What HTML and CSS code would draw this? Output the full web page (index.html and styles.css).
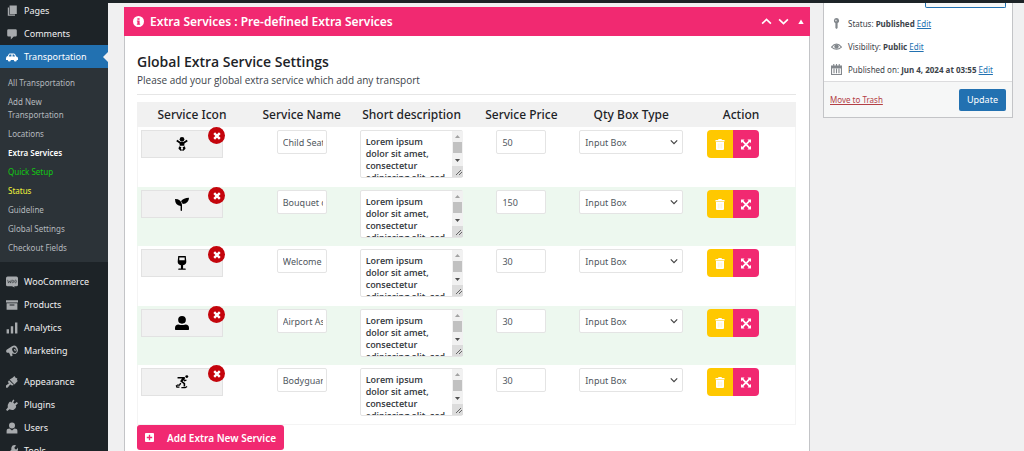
FILE: index.html
```html
<!DOCTYPE html>
<html lang="en">
<head>
<meta charset="utf-8">
<title>Extra Services</title>
<link rel="stylesheet" href="styles.css">
</head>
<body>
<svg class="sprite" aria-hidden="true">
  <symbol id="i-pages" viewBox="0 0 20 20"><path d="M6 1h12v14H6zM3 4h2v12h10v2H3z"/></symbol>
  <symbol id="i-comment" viewBox="0 0 20 20"><path d="M4 2h12q2 0 2 2v8q0 2-2 2h-3l-5 5v-5H4q-2 0-2-2V4q0-2 2-2z"/></symbol>
  <symbol id="i-car" viewBox="0 0 20 20"><path d="M6 4h7q1 0 2 1l2 4q3 0 3 3v3h-2a2.500 2.500 0 0 1-5 0H8a2.500 2.500 0 0 1-5 0H0v-3q0-3 3-3.500l1.500-3Q5 4 6 4zm0 2L4.500 9H9V6zm5 0v3h4l-1.500-3z"/></symbol>
  <symbol id="i-woo" viewBox="0 0 22 20"><path d="M3 0h16q3 0 3 3v12q0 3-3 3h-4l1 2-5-2H3q-3 0-3-3V3q0-3 3-3z"/><path class="cut" d="M3 6l1.500 6 2-4 2 4 1-6M11 9a1.500 2.500 0 1 0 3 0 1.500 2.500 0 1 0-3 0M16 9a1.500 2.500 0 1 0 3 0 1.500 2.500 0 1 0-3 0"/></symbol>
  <symbol id="i-products" viewBox="0 0 20 20"><path d="M0 2h20v4H0zM1 7h18v11H1zm5 2v2h8V9z" fill-rule="evenodd"/></symbol>
  <symbol id="i-bars" viewBox="0 0 20 20"><path d="M1 12h4v7H1zM8 7h4v12H8zM15 1h4v18h-4z"/></symbol>
  <symbol id="i-megaphone" viewBox="0 0 20 20"><path d="M1 8l9-6q6-3 9 3t-3 10l-6-1 1 4-3 1-3-6-3 0Q-1 11 1 8zM12 4q-3 2-1 6t5 3q3-2 1-6t-5-3zm1 3q2-1 3 1t-1 3z" fill-rule="evenodd"/></symbol>
  <symbol id="i-brush" viewBox="0 0 20 20"><path d="M11 3l3-3 2 3 3 1-1 3 2 1-6 6-8-8zM5 7l8 8-3 1-3-2-4 5q-2 1-3 0t0-3l5-4-2-2z"/></symbol>
  <symbol id="i-plug" viewBox="0 0 20 20"><path d="M12 1l2 1-2 4 2 2 4-3 2 2-4 4 1 1q0 4-4 6-4 1-7-1l-4 3-2-2 3-4Q2 10 5 6l2-2 2 2z"/></symbol>
  <symbol id="i-user" viewBox="0 0 20 20"><circle cx="10" cy="6" r="5"/><path d="M1 19v-4q0-4 5-4l4 3 4-3q5 0 5 4v4z"/></symbol>
  <symbol id="i-wrench" viewBox="0 0 20 20"><path d="M11 1q3-2 6 0l-3 3 1 3 3 0 2-3q1 5-2 7t-6 1l-7 7q-2 1-4-1t0-3l8-7q-1-4 2-7z"/></symbol>
  <symbol id="i-info" viewBox="0 0 20 20"><path d="M10 0a10 10 0 1 1 0 20 10 10 0 1 1 0-20zM8 4v3h4V4zM7 8v2h1v4H7v2h6v-2h-1V8z" fill-rule="evenodd"/></symbol>
  <symbol id="i-up" viewBox="0 0 20 20"><path class="line" d="M2 14l8-8 8 8"/></symbol>
  <symbol id="i-down" viewBox="0 0 20 20"><path class="line" d="M2 6l8 8 8-8"/></symbol>
  <symbol id="i-tri" viewBox="0 0 20 20"><path d="M10 2l9 15H1z"/></symbol>
  <symbol id="i-x" viewBox="0 0 20 20"><path class="line thick" d="M3 3l14 14M17 3L3 17"/></symbol>
  <symbol id="i-baby" viewBox="0 0 20 24"><circle cx="10" cy="4" r="4"/><path class="line" d="M1 6l6 4h6l6-4"/><path d="M6 9h8v6H6zM5 16l4 1.500-1 2 2 3-2 1.500-4-4zM15 16l-4 1.500 1 2-2 3 2 1.500 4-4z"/></symbol>
  <symbol id="i-seedling" viewBox="0 0 20 20"><path d="M0 3q9 0 10 8v8q0 1-1 1t-1-1v-6Q0 12 0 3zM20 1q0 8-9 9-1-3-2.500-4Q12 1 20 1z"/></symbol>
  <symbol id="i-glass" viewBox="0 0 20 26"><path d="M3 0h14l1 10q0 6-6 7v6h4q1 0 1 2.500H3Q3 23 4 23h4v-6q-6-1-6-7zm2 3v5h10V3z" fill-rule="evenodd"/></symbol>
  <symbol id="i-person" viewBox="0 0 20 20"><circle cx="10" cy="5.500" r="5.500"/><path d="M0 19v-2q0-5 5-5 5 1.500 10 0 5 0 5 5v2q0 1-1 1H1q-1 0-1-1z"/></symbol>
  <symbol id="i-skate" viewBox="0 0 20 22"><circle cx="17.500" cy="2.500" r="2.300"/><path d="M3 3h11l1 2-4 5 4 3v5h-2.500v-4L7 10l3-4.500H3zM7 12l2 1.500L6.500 17H2v-2h3.500z"/><path class="line mid" d="M12 6l2 3 3-1M1 16l1 3h4M9 20h6l3-2"/></symbol>
  <symbol id="i-trash" viewBox="0 0 20 22"><path d="M1 2h5l1-2h6l1 2h5v3H1zM2 6h16v14q0 2-2 2H4q-2 0-2-2z"/><path class="slot" d="M6.500 9v10M10 9v10M13.500 9v10"/></symbol>
  <symbol id="i-expand" viewBox="0 0 20 20"><path d="M0 0h7L5 2.500l5 5 5-5L13 0h7v7l-2.500-2-5 5 5 5 2.500-2v7h-7l2-2.500-5-5-5 5L7 20H0v-7l2.500 2 5-5-5-5L0 7z"/></symbol>
  <symbol id="i-plus" viewBox="0 0 20 20"><path d="M2 0h16q2 0 2 2v16q0 2-2 2H2q-2 0-2-2V2q0-2 2-2zM8.500 4v4.500H4v3h4.500V16h3v-4.500H16v-3h-4.500V4z" fill-rule="evenodd"/></symbol>
  <symbol id="i-pin" viewBox="0 0 20 20"><path d="M10 0a5 5 0 0 1 2 9.500V18l-2 2-2-2V9.500A5 5 0 0 1 10 0zM8 3v3h2V3z" fill-rule="evenodd"/></symbol>
  <symbol id="i-eye" viewBox="0 0 20 20"><path class="line mid" d="M1 11q9-11 18 0-9 8-18 0z"/><circle cx="10" cy="10" r="4"/></symbol>
  <symbol id="i-cal" viewBox="0 0 20 20"><path d="M0 3h20v5H0z"/><path class="line mid" d="M1 4h18v15H1zM5 0v5M10 0v5M15 0v5M5.500 8v9M10 8v9M14.500 8v9"/></symbol>
</svg>

<div class="adminbar"></div>
<div class="layout">
  <nav class="sidebar" aria-label="Admin menu">
    <a class="item" href="#"><svg><use href="#i-pages"/></svg>Pages</a>
    <a class="item" href="#"><svg><use href="#i-comment"/></svg>Comments</a>
    <a class="item current" href="#"><svg><use href="#i-car"/></svg>Transportation</a>
    <div class="submenu">
      <a href="#">All Transportation</a>
      <a href="#">Add New<br>Transportation</a>
      <a href="#">Locations</a>
      <a class="on" href="#">Extra Services</a>
      <a class="green" href="#">Quick Setup</a>
      <a class="yellow" href="#">Status</a>
      <a href="#">Guideline</a>
      <a href="#">Global Settings</a>
      <a href="#">Checkout Fields</a>
    </div>
    <a class="item gap" href="#"><svg><use href="#i-woo"/></svg>WooCommerce</a>
    <a class="item" href="#"><svg><use href="#i-products"/></svg>Products</a>
    <a class="item" href="#"><svg><use href="#i-bars"/></svg>Analytics</a>
    <a class="item" href="#"><svg><use href="#i-megaphone"/></svg>Marketing</a>
    <a class="item gap" href="#"><svg><use href="#i-brush"/></svg>Appearance</a>
    <a class="item" href="#"><svg><use href="#i-plug"/></svg>Plugins</a>
    <a class="item" href="#"><svg><use href="#i-user"/></svg>Users</a>
    <a class="item" href="#"><svg><use href="#i-wrench"/></svg>Tools</a>
  </nav>

  <main class="panel">
    <header class="panel-head">
      <svg><use href="#i-info"/></svg>
      <h1>Extra Services : Pre-defined Extra Services</h1>
      <button aria-label="Move up"><svg><use href="#i-up"/></svg></button>
      <button aria-label="Move down"><svg><use href="#i-down"/></svg></button>
      <button class="toggle" aria-label="Toggle panel"><svg><use href="#i-tri"/></svg></button>
    </header>
    <div class="panel-body">
      <h2>Global Extra Service Settings</h2>
      <p class="intro">Please add your global extra service which add any transport</p>
      <table>
        <thead>
          <tr><th>Service Icon</th><th>Service Name</th><th>Short description</th><th>Service Price</th><th>Qty Box Type</th><th>Action</th></tr>
        </thead>
        <tbody id="rows"></tbody>
      </table>
      <button class="add"><svg><use href="#i-plus"/></svg>Add Extra New Service</button>
    </div>
  </main>

  <aside class="publish">
    <div class="publish-body">
      <button class="preview" aria-label="Preview"></button>
      <p><svg><use href="#i-pin"/></svg><span>Status: <b>Published</b> <a href="#">Edit</a></span></p>
      <p><svg><use href="#i-eye"/></svg><span>Visibility: <b>Public</b> <a href="#">Edit</a></span></p>
      <p><svg><use href="#i-cal"/></svg><span>Published on: <b>Jun 4, 2024 at 03:55</b> <a href="#">Edit</a></span></p>
    </div>
    <footer>
      <a class="trash" href="#">Move to Trash</a>
      <button class="update">Update</button>
    </footer>
  </aside>
</div>
<script src="rows.js"></script>
</body>
</html>
```
FILE: styles.css
```css
* { box-sizing: border-box; }
html, body { margin: 0; height: 100%; overflow: hidden; }
body { background: #f0f0f1; color: #3c434a; font-family: "Noto Sans", "Open Sans", sans-serif; font-size: 9px; }
button, input, select, textarea { font-family: inherit; margin: 0; }
button { border: 0; padding: 0; cursor: pointer; }
svg { fill: currentColor; flex: none; display: block; }
.sprite { position: absolute; width: 0; height: 0; }
.line { fill: none; stroke: currentColor; stroke-width: 3; }
.thick { stroke-width: 6; }
.mid { stroke-width: 2; }
.cut { fill: none; stroke: #1d2327; stroke-width: 1; }
.slot { fill: none; stroke: #ffc800; stroke-width: 1; opacity: .4; }

.adminbar { position: fixed; inset: 0 0 auto; height: 3px; background: #1d2327; z-index: 5; }
.layout { display: flex; align-items: flex-start; min-height: 100%; }

.sidebar { width: 108px; flex: none; align-self: stretch; background: #1d2327; margin-top: -1px; }
.sidebar a { text-decoration: none; }
.item { display: flex; align-items: center; gap: 6px; height: 23px; padding-left: 6px; color: #f0f0f1; font-size: 9px; white-space: nowrap; }
.item svg { width: 12px; height: 12px; color: #a7aaad; }
.gap { margin-top: 8px; }
.current { position: relative; background: #2271b1; color: #fff; }
.current svg { color: #fff; }
.current::after { content: ""; position: absolute; right: 0; top: 7px; border: 5px solid transparent; border-right-color: #f0f0f1; border-left: 0; }
.submenu { background: #2c3338; padding: 5px 0; }
.submenu a { display: block; padding: 3px 8px; line-height: 13px; font-size: 8px; color: #b4b9be; white-space: nowrap; }
.submenu .on { color: #fff; font-weight: 600; }
.submenu .green { color: #12c912; }
.submenu .yellow { color: #f5f53a; }

.panel { flex: 1; min-width: 0; margin: 7px 13px 0 16px; background: #fff; border: 1px solid #c3c4c7; border-top: 0; }
.panel-head { display: flex; align-items: center; gap: 6px; height: 29px; margin: 0 -1px; padding: 0 6px 0 9px; background: #f12971; color: #fff; }
.panel-head svg { width: 11px; height: 11px; }
.panel-head h1 { flex: 1; margin: 0; font-size: 12px; font-weight: 600; }
.panel-head button { background: none; color: inherit; }
.panel-head .toggle svg { width: 6px; height: 6px; margin-left: 3px; }
.panel-body { padding: 16px 13px 12px 12px; }
h2 { margin: 0; font-family: "Open Sans", sans-serif; font-size: 14px; line-height: 20px; font-weight: 600; color: #1d2327; }
.intro { margin: 0 0 7px; padding-bottom: 6px; border-bottom: 1px solid #e6e6e6; font-family: "Open Sans", sans-serif; font-size: 10px; line-height: 16px; }

table { width: 100%; table-layout: fixed; border-collapse: collapse; box-shadow: inset 0 0 0 1px #f4f4f4; }
th { height: 25px; padding: 0; background: #f1f1f1; color: #1d2327; font-size: 12px; font-weight: 500; white-space: nowrap; }
td { height: 60px; padding: 3px; vertical-align: top; text-align: center; }
tbody tr:nth-child(even) { background: #edf8ef; }
tbody tr:nth-child(even) td { height: 59px; }
.pick { position: relative; display: grid; place-items: center; width: 82px; height: 28px; margin-left: 1px; background: #f1f1f1; border: 1px solid #e2e2e2; color: #000; }
.pick > svg { width: 14px; height: 14px; }
.remove { position: absolute; top: -4px; right: -3px; display: grid; place-items: center; width: 17px; height: 17px; border-radius: 50%; background: #c4050c; color: #fff; }
.remove svg { width: 8px; height: 8px; }
td input { display: block; width: 50px; height: 24px; margin: 0 auto; padding: 0 3px 0 5px; border: 1px solid #e4e4e4; border-radius: 2px; background: #fff; color: #50575e; font-size: 9px; }
.area { position: relative; height: 48px; }
textarea { display: block; width: 100%; height: 48px; padding: 5px 15px 0 5px; border: 1px solid #e4e4e4; border-radius: 2px; background: #fff; color: #32373c; font-family: "Open Sans", sans-serif; font-size: 9px; line-height: 12px; font-weight: 600; resize: none; overflow: hidden; }
.bar { position: absolute; top: 1px; right: 0; width: 11px; height: 46px; }
td select { display: block; width: 100%; height: 24px; padding: 0 5px; border: 1px solid #e4e4e4; border-radius: 2px; background: #fff; color: #50575e; font-size: 9px; appearance: none; }
.select { position: relative; }
.select svg { position: absolute; right: 5px; top: 8px; width: 8px; height: 8px; color: #444; pointer-events: none; }
.actions { display: flex; justify-content: center; padding-right: 16px; }
.actions button { display: grid; place-items: center; width: 26px; height: 28px; color: #fff; }
.actions svg { width: 10px; height: 11px; }
.actions .del { background: #ffc800; border-radius: 4px 0 0 4px; }
.actions .move { background: #f12971; border-radius: 0 4px 4px 0; }
.add { display: flex; align-items: center; gap: 13px; height: 25px; padding: 0 8px; border-radius: 3px; background: #f12971; color: #fff; font-size: 10px; font-weight: 600; }
.add svg { width: 9px; height: 9px; }

.publish { width: 190px; flex: none; margin-right: 11px; background: #fff; border: 1px solid #c3c4c7; }
.preview { display: block; width: 81px; height: 7px; margin: 0 6px 4px auto; background: #f6f7f7; border: 1px solid #2271b1; border-top: 0; border-radius: 0 0 2px 2px; }
.publish p { display: flex; align-items: center; gap: 6px; height: 23px; margin: 0; padding-left: 7px; white-space: nowrap; font-size: 8px; }
.publish p svg { width: 11px; height: 11px; color: #82878c; }
.publish a { color: #2271b1; }
.publish footer { display: flex; justify-content: space-between; align-items: center; height: 36px; padding: 0 6px; background: #f6f7f7; border-top: 1px solid #dcdcde; }
.publish .trash { color: #b34046; font-size: 8px; }
.update { height: 22px; padding: 0 8px; border-radius: 2px; background: #2271b1; color: #fff; font-size: 9px; }
```
FILE: rows.js
```js
const services = [
  { icon: "baby", name: "Child Seat", price: "50" },
  { icon: "seedling", name: "Bouquet of Flowers", price: "150" },
  { icon: "glass", name: "Welcome Drink", price: "30" },
  { icon: "person", name: "Airport Assistance", price: "30" },
  { icon: "skate", name: "Bodyguard Service", price: "30" }
];

const text = "Lorem ipsum dolor sit amet, consectetur adipiscing elit, sed do eiusmod tempor incididunt.";
const svg = id => `<svg><use href="#i-${id}"/></svg>`;

document.getElementById("rows").innerHTML = services.map(s => `
  <tr>
    <td><div class="pick">${svg(s.icon)}<button class="remove" aria-label="Remove icon">${svg("x")}</button></div></td>
    <td><input type="text" aria-label="Service name" value="${s.name}"></td>
    <td><div class="area"><textarea aria-label="Short description">${text}</textarea>
      <svg class="bar" viewBox="0 0 11 46">
        <path fill="#f1f1f1" d="M0 0h11v35H0z"/><path fill="#dcdcdc" d="M0 35h11v11H0z"/>
        <path fill="#c1c1c1" d="M1 11h9v11H1z"/><path fill="#a3a3a3" d="M3 7l2.500-3L8 7z"/><path fill="#505050" d="M3 28l2.500 3L8 28z"/>
        <path fill="none" stroke="#666" d="M4 44l5-5M7 44l3-3"/>
      </svg></div></td>
    <td><input type="text" aria-label="Service price" value="${s.price}"></td>
    <td><div class="select"><select aria-label="Quantity box type"><option>Input Box</option></select>${svg("down")}</div></td>
    <td><div class="actions"><button class="del" aria-label="Delete">${svg("trash")}</button><button class="move" aria-label="Move">${svg("expand")}</button></div></td>
  </tr>`).join("");
```
